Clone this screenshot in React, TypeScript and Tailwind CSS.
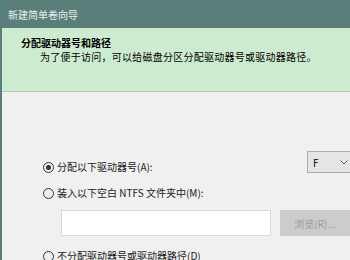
import React from "react";

const font = "font-['Microsoft_YaHei','Noto_Sans_CJK_SC',sans-serif]";

const Radio = ({ checked = false, label }: { checked?: boolean; label: string }) => (
  <label className="flex items-center gap-[3px] text-[10px] leading-[14px] text-[#1a1a1a]">
    <span className="flex h-[11px] w-[11px] items-center justify-center rounded-full border border-[#333] bg-[#f0f0f0]">
      {checked && <span className="h-[5px] w-[5px] rounded-full bg-[#333]" />}
    </span>
    <span>{label}</span>
  </label>
);

const App: React.FC = () => {
  return (
    <div className={`flex h-[260px] w-[350px] flex-col overflow-hidden bg-[#f0f0f0] ${font}`}>
      <div className="flex h-[28px] shrink-0 items-center bg-[#5a7f7a] pl-[8px] text-[10px] text-[#e8efee]">
        新建简单卷向导
      </div>
      <div className="flex flex-1 flex-col border-l-2 border-[#5a7f7a]">
        <div className="h-[64px] shrink-0 border-b border-[#b5c4b7] bg-[#cdebd0] pl-[19px] pt-[8px] text-[10px] text-black">
          <div className="font-bold leading-[14px]">分配驱动器号和路径</div>
          <div className="pl-[19px] leading-[14px] tracking-[0.25px]">为了便于访问，可以给磁盘分区分配驱动器号或驱动器路径。</div>
        </div>
        <div className="flex flex-col pl-[41px] pt-[59px]">
          <div className="flex h-[22px] items-end">
            <div className="mb-[-1px]">
              <Radio checked label="分配以下驱动器号(A):" />
            </div>
            <div className="ml-auto mr-[-40px] flex h-[22px] w-[83px] shrink-0 items-center justify-between border border-[#adadad] bg-[#e5e5e5] pl-[5px] pr-[41px] text-[10px] text-black">
              <span>F</span>
              <svg width="8" height="5" viewBox="0 0 8 5" fill="none">
                <path d="M0.5 0.5 L4 4 L7.5 0.5" stroke="#555" strokeWidth="1" />
              </svg>
            </div>
          </div>
          <div className="mt-[13px]">
            <Radio label="装入以下空白 NTFS 文件夹中(M):" />
          </div>
          <div className="mt-[10px] flex gap-[9px] pl-[18px]">
            <div className="h-[26px] w-[211px] border border-[#d9d9d9] bg-white" />
            <div className="flex h-[26px] w-[70px] shrink-0 items-center justify-center bg-[#cccccc] text-[10px] text-[#9a9a9a]">
              浏览(R)...
            </div>
          </div>
          <div className="mt-[13px]">
            <Radio label="不分配驱动器号或驱动器路径(D)" />
          </div>
        </div>
      </div>
    </div>
  );
};

export default App;
